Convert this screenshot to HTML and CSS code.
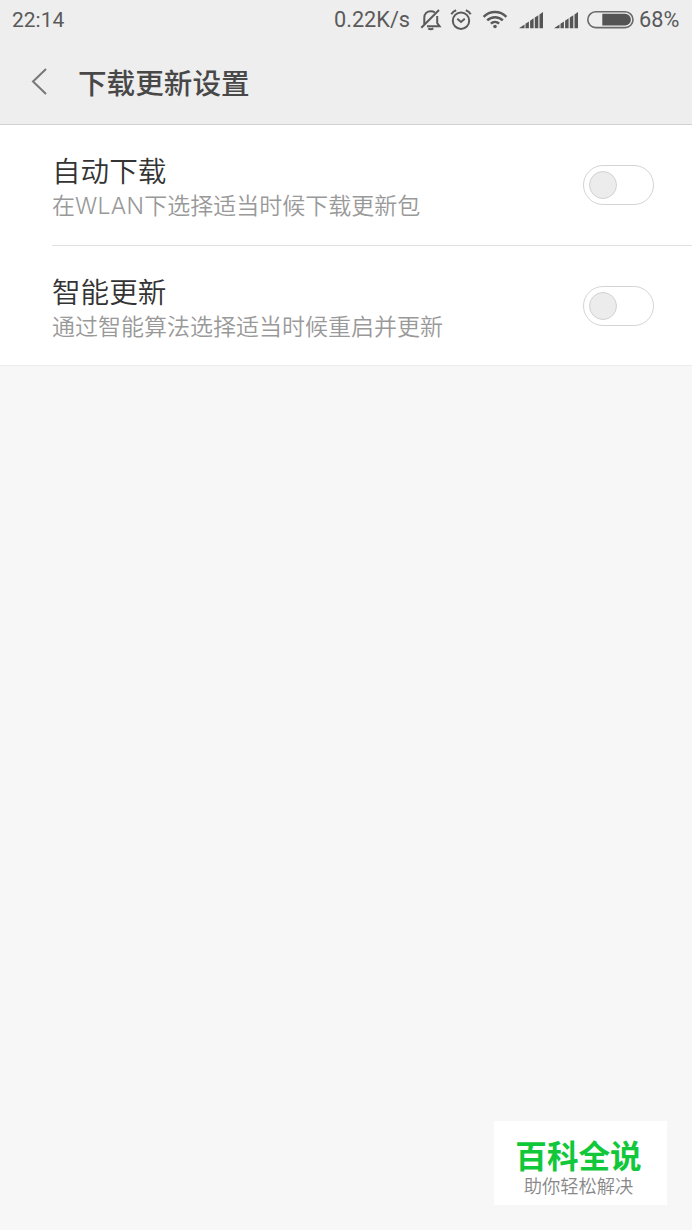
FILE: index.html
```html
<!DOCTYPE html>
<html lang="zh-CN">
<head>
  <meta charset="UTF-8" />
  <meta name="viewport" content="width=device-width, initial-scale=1.0" />
  <title>下载更新设置</title>
  <link rel="stylesheet" href="styles.css">
</head>
<body>
  <header class="header">
    <div class="status">
      <span class="time">22:14</span>
      <span class="speed">0.22K/s</span>
      <svg class="bell" width="22" height="22" viewBox="0 0 22 22">
        <path d="M4.3 15V8.7C4.3 4.8 7 2.2 10.8 2.2C12.4 2.2 13.8 2.7 14.9 3.5M17.2 7V14L19.6 17.3H7" />
        <path d="M1.3 18.8L19 1" />
        <path d="M8.3 19.4Q10.8 21 13.3 19.4" />
      </svg>
      <svg class="alarm" width="22" height="22" viewBox="0 0 22 22">
        <circle cx="11" cy="11.7" r="8.2" />
        <path d="M7.3 9.8L11 13L14.8 9.8M1.3 5.2Q3 2.2 6.2 1.2M20.7 5.2Q19 2.2 15.8 1.2" />
      </svg>
      <svg class="wifi" width="26" height="20" viewBox="0 0 26 20">
        <path d="M1.6 6.8C8 .4 18 .4 24.4 6.8M5.2 10.4C9.6 6.1 16.4 6.1 20.8 10.4M8.9 13.7C11.2 11.5 14.8 11.5 17.1 13.7" />
        <circle cx="13" cy="16.5" r="1.8" />
      </svg>
      <svg class="signal" width="25" height="17" viewBox="0 0 25 17">
        <path d="M0 16.3L5.5 12.5V16.3ZM6.5 11.8L9.9 9.5V16.3H6.5ZM11.1 8.7L14.6 6.3V16.3H11.1ZM15.8 5.5L19.3 3.2V16.3H15.8ZM20.5 2.4L24 0V16.3H20.5Z" />
      </svg>
      <svg class="signal second" width="25" height="17" viewBox="0 0 25 17">
        <path d="M0 16.3L5.5 12.5V16.3ZM6.5 11.8L9.9 9.5V16.3H6.5ZM11.1 8.7L14.6 6.3V16.3H11.1ZM15.8 5.5L19.3 3.2V16.3H15.8ZM20.5 2.4L24 0V16.3H20.5Z" />
      </svg>
      <svg class="battery" width="47" height="18" viewBox="0 0 47 18">
        <rect x=".8" y=".8" width="45.2" height="15.8" rx="7.9" />
        <path d="M15.3 2.8H38A5.9 5.9 0 0 1 38 14.6H15.3Z" />
      </svg>
      <span class="percent">68%</span>
    </div>
    <div class="bar">
      <svg class="back" width="18" height="28" viewBox="0 0 18 28">
        <path d="M16 1L3 13.5L16 26" />
      </svg>
      <h1>下载更新设置</h1>
    </div>
  </header>

  <main class="list">
    <div class="row">
      <div class="text">
        <h2>自动下载</h2>
        <p>在<span class="latin">WLAN</span>下选择适当时候下载更新包</p>
      </div>
      <span class="switch"><span class="knob"></span></span>
    </div>
    <div class="row">
      <div class="text">
        <h2>智能更新</h2>
        <p>通过智能算法选择适当时候重启并更新</p>
      </div>
      <span class="switch"><span class="knob"></span></span>
    </div>
  </main>

  <footer class="brand">
    <strong>百科全说</strong>
    <span>助你轻松解决</span>
  </footer>
</body>
</html>
```
FILE: styles.css
```css
* {
  box-sizing: border-box;
}
body {
  margin: 0;
  height: 1230px;
  display: flex;
  flex-direction: column;
  background-color: #f7f7f7;
  font-family: "Noto Sans CJK SC", sans-serif;
}
h1, h2, p {
  margin: 0;
}
svg {
  display: block;
  flex: none;
  fill: none;
  stroke: #5a5a5a;
  stroke-width: 2;
}
.header {
  height: 125px;
  background-color: #eee;
  border-bottom: 1px solid #d2d2d2;
}
.status {
  height: 40px;
  padding: 0 10px 0 12px;
  display: flex;
  align-items: center;
  color: #5a5a5a;
  font-family: Roboto, sans-serif;
  font-size: 21px;
  line-height: 40px;
}
.time {
  width: 322px;
}
.speed {
  width: 76px;
  font-size: 21.7px;
}
.bell {
  margin-left: 10px;
}
.alarm {
  margin-left: 8px;
}
.wifi {
  margin-left: 10px;
  stroke-width: 2.5;
}
.wifi circle {
  fill: #5a5a5a;
  stroke: none;
}
.signal {
  margin-left: 11px;
  fill: #555;
  stroke: none;
}
.second {
  margin-left: 10px;
}
.battery {
  margin-left: 8px;
}
.battery rect {
  stroke: #6a6a6a;
  stroke-width: 1.6;
}
.battery path {
  fill: #545454;
  stroke: none;
}
.percent {
  margin-left: 5px;
  font-size: 21.7px;
}
.bar {
  height: 84px;
  padding-left: 30px;
  display: flex;
  align-items: center;
}
.back {
  stroke: #777;
}
h1 {
  margin-left: 30px;
  color: #484848;
  font-size: 28.6px;
  font-weight: 500;
  line-height: 40px;
}
.list {
  padding-left: 52px;
  background-color: #fff;
  border-bottom: 1px solid #ebebeb;
}
.row {
  height: 119px;
  padding-right: 38px;
  display: flex;
  align-items: center;
  justify-content: space-between;
}
.row:first-child {
  height: 121px;
  border-bottom: 1px solid #e2e2e2;
}
.text {
  padding-top: 2px;
}
h2 {
  color: #333;
  font-size: 28.6px;
  font-weight: 350;
  line-height: 36px;
}
p {
  color: #999;
  font-size: 23px;
  font-weight: 350;
  line-height: 32px;
}
.row:first-child .text {
  padding-top: 3px;
}
.latin {
  font-family: Inter, sans-serif;
  font-weight: 300;
  letter-spacing: 0.3px;
}
.switch {
  width: 71px;
  height: 40px;
  padding: 5px;
  border: 1px solid #d4d4d4;
  border-radius: 20px;
}
.knob {
  display: block;
  width: 28px;
  height: 28px;
  background-color: #ececec;
  border: 1px solid #d2d2d2;
  border-radius: 50%;
}
.brand {
  width: 173px;
  height: 84px;
  margin: auto 25px 25px auto;
  padding: 15px 4px 0 0;
  display: flex;
  flex-direction: column;
  align-items: center;
  background-color: #fff;
}
.brand strong {
  color: #10c83a;
  font-size: 31.6px;
  font-weight: 700;
  line-height: 37px;
}
.brand span {
  color: #888;
  font-size: 18.3px;
  font-weight: 350;
  line-height: 24px;
}
```
